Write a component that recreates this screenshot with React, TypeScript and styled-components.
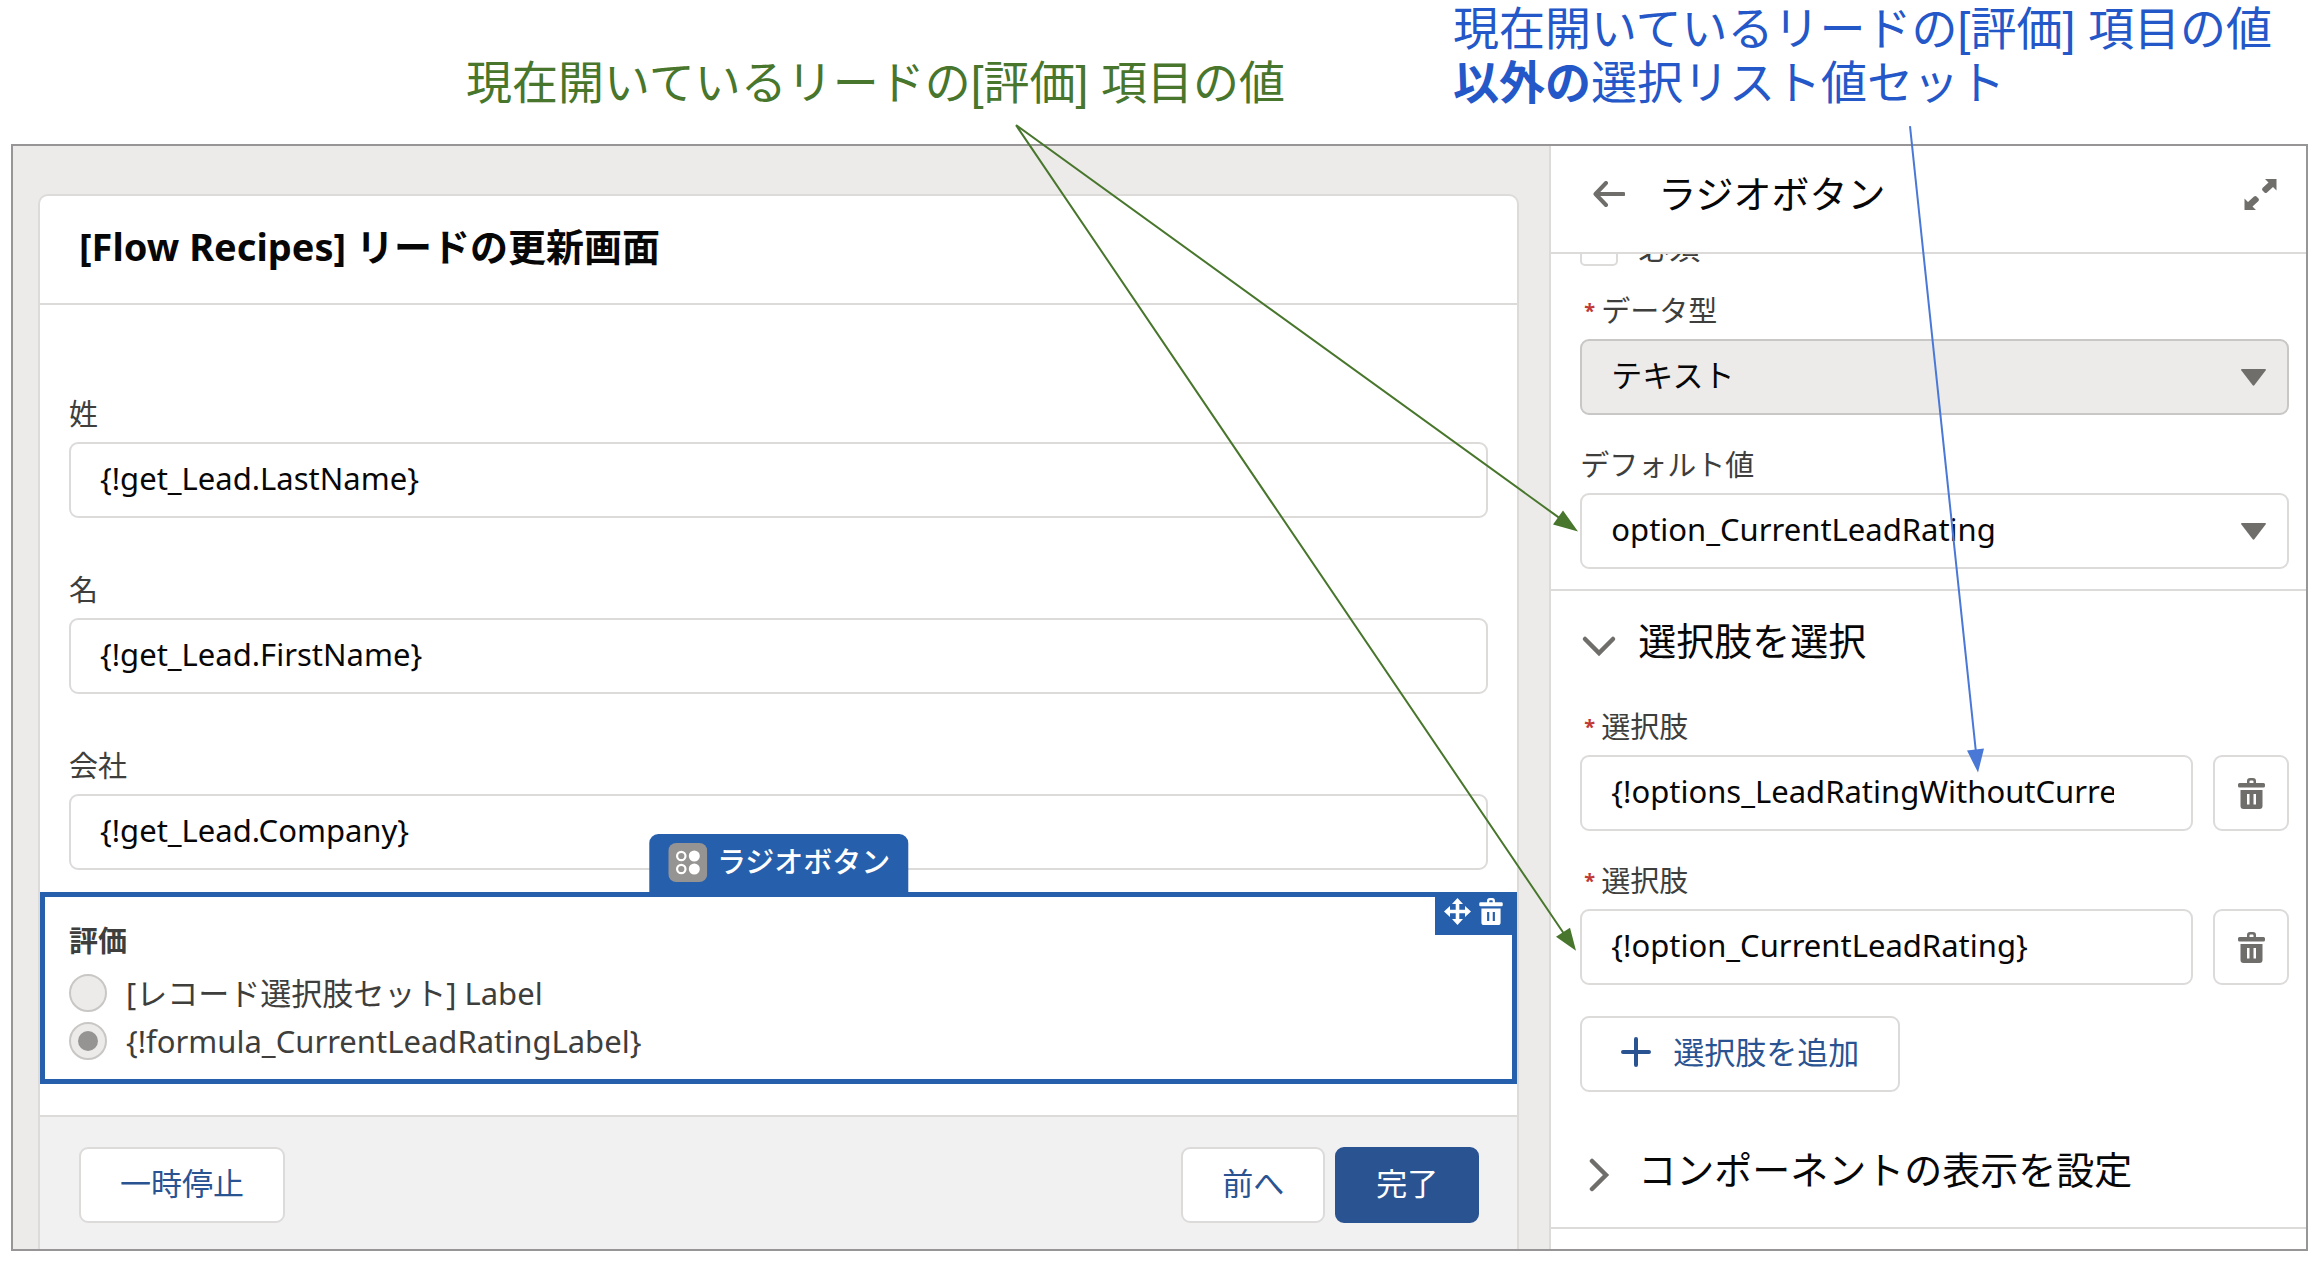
import React, { useId } from "react";
import styled, { createGlobalStyle, css } from "styled-components";

const GlobalStyle = createGlobalStyle`
  *, *::before, *::after { box-sizing: border-box; }
  body {
    margin: 0;
    background: #fff;
    color: #080707;
    font-family: "Noto Sans", "Noto Sans CJK JP", sans-serif;
    font-size: 31px;
  }
  button, input, select { font: inherit; color: inherit; margin: 0; }
`;

const line = "#dddbda";
const brand = "#2a5392";
const select = "#265fac";
const icon = "#706e6b";

const Page = styled.div`
  position: relative;
  padding: 2px 12px 12px 11px;
`;

const Notes = styled.header`
  display: grid;
  grid-template-columns: 1fr 855px;
  align-items: end;
  padding-bottom: 34px;
  font-family: "Liberation Sans", "Noto Sans CJK JP", sans-serif;
  font-size: 46px;
  line-height: 54px;
`;

const Note = styled.p<{ $tone: "green" | "blue" }>`
  margin: 0;
  white-space: nowrap;
  color: ${(p) => (p.$tone === "green" ? "#48762c" : "#2457c8")};
  text-align: ${(p) => (p.$tone === "green" ? "right" : "left")};
  padding-right: ${(p) => (p.$tone === "green" ? "168px" : "0")};
`;

const Arrows = styled.svg`
  position: absolute;
  inset: 0;
  width: 100%;
  height: 100%;
  pointer-events: none;
`;

const Frame = styled.div`
  display: grid;
  grid-template-columns: 1fr 33%;
  border: 2px solid #979595;
`;

const Workspace = styled.main`
  display: flex;
  background: #ecebe9;
  padding: 48px 30px 0 25px;
`;

const Card = styled.section`
  flex: 1;
  display: flex;
  flex-direction: column;
  background: #fff;
  border: 2px solid ${line};
  border-bottom: 0;
  border-radius: 10px 10px 0 0;
`;

const CardHeader = styled.div`
  padding: 22px 39px 29px;
  border-bottom: 2px solid ${line};
`;

const CardTitle = styled.h1`
  margin: 0;
  font-size: 38px;
  line-height: 56px;
  font-weight: 700;
`;

const ScreenFields = styled.div`
  display: grid;
  gap: 53px;
  padding: 90px 29px 22px;
`;

const FieldBox = styled.div`
  display: grid;
  gap: 9px;
  min-width: 0;
`;

const Label = styled.label`
  display: flex;
  align-items: center;
  font-size: 29px;
  line-height: 38px;
  color: #3e3e3c;
`;

const Asterisk = styled.span`
  width: 21px;
  padding-left: 4px;
  font-size: 20px;
  line-height: 38px;
  font-weight: 700;
  color: #c23934;
`;

const control = css`
  width: 100%;
  height: 76px;
  border: 2px solid ${line};
  border-radius: 9px;
  background: #fff;
  color: #080707;
  outline: none;
`;

const TextInput = styled.input<{ $narrow?: boolean }>`
  ${control}
  padding: 0 ${(p) => (p.$narrow ? "77px" : "31px")} 4px 29px;
`;

const SelectWrap = styled.div`
  position: relative;
`;

const Select = styled.select`
  ${control}
  appearance: none;
  padding: 0 70px 4px 29px;
  &:disabled {
    background: #ecebea;
    border-color: #c9c7c5;
    opacity: 1;
  }
`;

const SelectArrow = styled.svg`
  position: absolute;
  right: 23px;
  top: 30px;
  pointer-events: none;
`;

const Selected = styled.fieldset`
  position: relative;
  margin: 0;
  min-width: 0;
  border: 5px solid ${select};
  padding: 25px 24px 19px;
`;

const GroupLabel = styled.div`
  font-size: 29px;
  line-height: 38px;
  font-weight: 700;
  color: #3e3e3c;
  margin-bottom: 14px;
`;

const RadioList = styled.div`
  display: grid;
  gap: 10px;
`;

const RadioRow = styled.label`
  display: flex;
  align-items: center;
  gap: 19px;
  line-height: 38px;
  color: #3e3e3c;
`;

const Radio = styled.input`
  appearance: none;
  display: grid;
  place-items: center;
  width: 38px;
  height: 38px;
  border: 2px solid #c9c7c5;
  border-radius: 50%;
  background: #ecebea;
  &:checked::before {
    content: "";
    width: 20px;
    height: 20px;
    border-radius: 50%;
    background: #969492;
  }
`;

const ComponentTab = styled.div`
  position: absolute;
  bottom: 100%;
  left: 50%;
  transform: translateX(-50%);
  display: flex;
  align-items: center;
  gap: 10px;
  height: 63px;
  padding: 0 18px 7px 19px;
  border-radius: 9px 9px 0 0;
  background: ${select};
  color: #fff;
  font-size: 29px;
  line-height: 38px;
  font-weight: 500;
  white-space: nowrap;
`;

const Toolbar = styled.div`
  position: absolute;
  top: 0;
  right: 0;
  display: flex;
  align-items: flex-start;
  gap: 8px;
  height: 38px;
  width: 77px;
  padding: 1px 0 0 9px;
  background: ${select};
`;

const IconButton = styled.button`
  display: grid;
  place-items: center;
  padding: 0;
  border: 0;
  background: none;
  color: inherit;
`;

const ToolButton = styled(IconButton)`
  color: #fff;
`;

const CardFooter = styled.div`
  flex: 1;
  display: flex;
  align-items: flex-start;
  gap: 10px;
  margin-top: 31px;
  padding: 30px 38px 25px 39px;
  border-top: 2px solid ${line};
  background: #f1f1f1;
`;

const Button = styled.button<{ $primary?: boolean }>`
  display: flex;
  align-items: center;
  justify-content: center;
  gap: 22px;
  height: 76px;
  padding: 0 39px 8px;
  border: 2px solid ${(p) => (p.$primary ? brand : line)};
  border-radius: 9px;
  background: ${(p) => (p.$primary ? brand : "#fff")};
  color: ${(p) => (p.$primary ? "#fff" : brand)};
  white-space: nowrap;
  & > svg {
    margin-top: 4px;
  }
`;

const Spacer = styled.div`
  flex: 1;
`;

const Panel = styled.aside`
  min-width: 0;
  border-left: 2px solid ${line};
  background: #fff;
`;

const PanelHeader = styled.div`
  display: flex;
  align-items: center;
  height: 108px;
  padding: 0 29px 10px 42px;
  border-bottom: 2px solid ${line};
  color: ${icon};
`;

const PanelTitle = styled.h2`
  flex: 1;
  margin: 0 0 0 33px;
  padding-bottom: 2px;
  font-size: 38px;
  line-height: 56px;
  font-weight: 400;
  color: #080707;
`;

const PanelBody = styled.div`
  overflow: hidden;
`;

const PanelFields = styled.div`
  display: grid;
  gap: 31px;
  padding: 0 17px 20px 29px;
  border-bottom: 2px solid ${line};
`;

const CheckRow = styled.label`
  display: flex;
  align-items: center;
  gap: 20px;
  margin: -26px 0 -5px;
  font-size: 31px;
  line-height: 38px;
  color: #3e3e3c;
`;

const Checkbox = styled.input`
  appearance: none;
  width: 38px;
  height: 38px;
  border: 2px solid ${line};
  border-radius: 5px;
  background: #fff;
`;

const Section = styled.section<{ $last?: boolean }>`
  padding: ${(p) => (p.$last ? "49px 17px 30px 29px" : "21px 17px 0 29px")};
  border-bottom: ${(p) => (p.$last ? `2px solid ${line}` : "0")};
`;

const SectionHeading = styled.h3`
  margin: 0;
  font-size: 38px;
  line-height: 56px;
  font-weight: 400;
`;

const SectionToggle = styled.button`
  display: flex;
  align-items: center;
  gap: 20px;
  padding: 0;
  border: 0;
  background: none;
  color: #080707;
  & > svg {
    color: ${icon};
    margin-top: 12px;
  }
`;

const Choices = styled.div`
  display: grid;
  justify-items: start;
  gap: 31px;
  padding-top: 40px;
`;

const ChoiceRow = styled.div`
  display: grid;
  grid-template-columns: 1fr 76px;
  align-items: end;
  gap: 20px;
  width: 100%;
`;

const DeleteButton = styled(IconButton)`
  height: 76px;
  border: 2px solid ${line};
  border-radius: 9px;
  background: #fff;
  color: ${icon};
`;

const PanelTail = styled.div`
  height: 20px;
`;

const TrashIcon = ({ width, height }: { width: number; height: number }) => (
  <svg width={width} height={height} viewBox="0 0 27 31" aria-hidden="true">
    <path
      fill="currentColor"
      fillRule="evenodd"
      d="M9 5V3q0-3 3-3h3q3 0 3 3v2h7.500q1.500 0 1.500 1.500V8q0 1.500-1.500 1.500h-24Q0 9.500 0 8V6.500Q0 5 1.500 5zM11.500 5h4V3.500q0-1-1-1h-2q-1 0-1 1zM2.500 12h22v16q0 3-3 3h-16q-3 0-3-3zM9 16v10.500h2.500V16zM15.500 16v10.500H18V16z"
    />
  </svg>
);

const MoveIcon = () => (
  <svg width="27" height="27" viewBox="0 0 27 27" aria-hidden="true">
    <path
      fill="currentColor"
      d="M13.500 0 19 6h-3.700v5.700H21V8l6 5.500-6 5.500v-3.700h-5.700V21H19l-5.500 6L8 21h3.700v-5.700H6V19l-6-5.500L6 8v3.700h5.700V6H8z"
    />
  </svg>
);

const RadioGroupIcon = () => (
  <svg width="39" height="39" viewBox="0 0 39 39" aria-hidden="true">
    <rect width="39" height="39" rx="8" fill="#969492" />
    <g fill="none" stroke="#fff" strokeWidth="2.200">
      <circle cx="13" cy="13" r="4.200" />
      <circle cx="13" cy="26" r="4.200" />
    </g>
    <circle cx="26" cy="13" r="5.500" fill="#fff" />
    <circle cx="26" cy="26" r="5.500" fill="#fff" />
  </svg>
);

const BackIcon = () => (
  <svg width="32" height="26" viewBox="0 0 32 26" aria-hidden="true">
    <path
      d="M13 2 2.500 13 13 24M3 13h27.500"
      fill="none"
      stroke="currentColor"
      strokeWidth="4"
      strokeLinecap="round"
      strokeLinejoin="round"
    />
  </svg>
);

const ExpandIcon = () => (
  <svg width="33" height="33" viewBox="0 0 33 33" aria-hidden="true">
    <g fill="currentColor">
      <path d="M21 1h11.500v11.500l-3.500-3.500-6 5.500q-1.500 1-2.500 0l-2-2q-1-1 0-2.500l6-5.500z" />
      <path d="M12 32H.5V20.500l3.500 3.500 6-5.500q1.500-1 2.500 0l2 2q1 1 0 2.500l-6 5.500z" />
    </g>
  </svg>
);

const Chevron = ({ open }: { open: boolean }) => (
  <svg width="38" height="34" viewBox="0 0 38 34" aria-hidden="true">
    <path
      d={open ? "M5 10 19 24 33 10" : "M12 3 26 17 12 31"}
      fill="none"
      stroke="currentColor"
      strokeWidth="4.500"
      strokeLinecap="round"
      strokeLinejoin="miter"
    />
  </svg>
);

const PlusIcon = () => (
  <svg width="30" height="30" viewBox="0 0 30 30" aria-hidden="true">
    <path d="M15 2v26M2 15h26" stroke="currentColor" strokeWidth="4" strokeLinecap="round" />
  </svg>
);

function TextField({
  label,
  value,
  required,
  narrow,
}: {
  label: string;
  value: string;
  required?: boolean;
  narrow?: boolean;
}) {
  const id = useId();
  return (
    <FieldBox>
      <Label htmlFor={id}>
        {required && <Asterisk>*</Asterisk>}
        {label}
      </Label>
      <TextInput id={id} defaultValue={value} $narrow={narrow} />
    </FieldBox>
  );
}

function SelectField({
  label,
  value,
  required,
  disabled,
}: {
  label: string;
  value: string;
  required?: boolean;
  disabled?: boolean;
}) {
  const id = useId();
  return (
    <FieldBox>
      <Label htmlFor={id}>
        {required && <Asterisk>*</Asterisk>}
        {label}
      </Label>
      <SelectWrap>
        <Select id={id} disabled={disabled} defaultValue={value}>
          <option>{value}</option>
        </Select>
        <SelectArrow width="25" height="17" viewBox="0 0 25 17" aria-hidden="true">
          <path d="M1 0h23q1.500 0 .6 1.500L13.500 16q-1 1.300-2 0L.4 1.500Q-.5 0 1 0z" fill={icon} />
        </SelectArrow>
      </SelectWrap>
    </FieldBox>
  );
}

const screenFields = [
  { label: "姓", value: "{!get_Lead.LastName}" },
  { label: "名", value: "{!get_Lead.FirstName}" },
  { label: "会社", value: "{!get_Lead.Company}" },
];

const choices = ["{!options_LeadRatingWithoutCurrentValue}", "{!option_CurrentLeadRating}"];

export default function App() {
  return (
    <>
      <GlobalStyle />
      <Page>
        <Notes>
          <Note $tone="green">現在開いているリードの[評価] 項目の値</Note>
          <Note $tone="blue">
            現在開いているリードの[評価] 項目の値
            <br />
            <b>以外の</b>選択リスト値セット
          </Note>
        </Notes>

        <Frame>
          <Workspace>
            <Card>
              <CardHeader>
                <CardTitle>[Flow Recipes] リードの更新画面</CardTitle>
              </CardHeader>
              <ScreenFields>
                {screenFields.map((f) => (
                  <TextField key={f.label} label={f.label} value={f.value} />
                ))}
              </ScreenFields>

              <Selected aria-label="評価">
                <ComponentTab>
                  <RadioGroupIcon />
                  ラジオボタン
                </ComponentTab>
                <Toolbar>
                  <ToolButton type="button" aria-label="移動">
                    <MoveIcon />
                  </ToolButton>
                  <ToolButton type="button" aria-label="削除">
                    <TrashIcon width={24} height={27} />
                  </ToolButton>
                </Toolbar>
                <GroupLabel>評価</GroupLabel>
                <RadioList>
                  <RadioRow>
                    <Radio type="radio" name="rating" disabled />
                    [レコード選択肢セット] Label
                  </RadioRow>
                  <RadioRow>
                    <Radio type="radio" name="rating" disabled defaultChecked />
                    {"{!formula_CurrentLeadRatingLabel}"}
                  </RadioRow>
                </RadioList>
              </Selected>

              <CardFooter>
                <Button type="button">一時停止</Button>
                <Spacer />
                <Button type="button">前へ</Button>
                <Button type="button" $primary>
                  完了
                </Button>
              </CardFooter>
            </Card>
          </Workspace>

          <Panel>
            <PanelHeader>
              <IconButton type="button" aria-label="戻る">
                <BackIcon />
              </IconButton>
              <PanelTitle>ラジオボタン</PanelTitle>
              <IconButton type="button" aria-label="展開">
                <ExpandIcon />
              </IconButton>
            </PanelHeader>
            <PanelBody>
              <PanelFields>
                <CheckRow>
                  <Checkbox type="checkbox" />
                  必須
                </CheckRow>
                <SelectField label="データ型" value="テキスト" required disabled />
                <SelectField label="デフォルト値" value="option_CurrentLeadRating" />
              </PanelFields>

              <Section>
                <SectionHeading>
                  <SectionToggle type="button" aria-expanded="true">
                    <Chevron open />
                    選択肢を選択
                  </SectionToggle>
                </SectionHeading>
                <Choices>
                  {choices.map((value) => (
                    <ChoiceRow key={value}>
                      <TextField label="選択肢" value={value} required narrow />
                      <DeleteButton type="button" aria-label="選択肢を削除">
                        <TrashIcon width={27} height={31} />
                      </DeleteButton>
                    </ChoiceRow>
                  ))}
                  <Button type="button">
                    <PlusIcon />
                    選択肢を追加
                  </Button>
                </Choices>
              </Section>

              <Section $last>
                <SectionHeading>
                  <SectionToggle type="button" aria-expanded="false">
                    <Chevron open={false} />
                    コンポーネントの表示を設定
                  </SectionToggle>
                </SectionHeading>
              </Section>
              <PanelTail />
            </PanelBody>
          </Panel>
        </Frame>

        <Arrows viewBox="0 0 2320 1262" preserveAspectRatio="none" aria-hidden="true">
          <g stroke="#48762c" fill="#48762c">
            <path d="M1016 125 1560 518M1016 125 1564 933" fill="none" strokeWidth="2" />
            <path d="M1578 531 1563 510 1553 524zM1576 950 1570 927 1556 936z" stroke="none" />
          </g>
          <path d="M1910 126 1976 752" fill="none" stroke="#4a78d6" strokeWidth="2" />
          <path d="M1978 772 1984 748 1967 750z" fill="#4a78d6" />
        </Arrows>
      </Page>
    </>
  );
}
